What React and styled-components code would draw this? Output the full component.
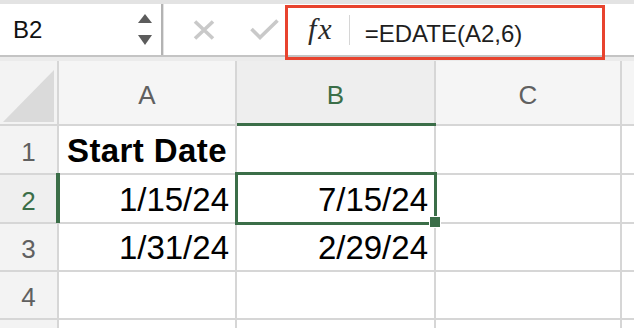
import React from 'react';
import styled, { createGlobalStyle } from 'styled-components';

const GREEN = '#3b6e48';

const Global = createGlobalStyle`
  html, body { margin: 0; padding: 0; background: #fff; overflow: hidden; }
  body { font-family: "Liberation Sans", Arial, sans-serif; }
`;

const Page = styled.div`
  position: relative;
  width: 634px;
  height: 328px;
  overflow: hidden;
  background: #fff;
`;

const Toolbar = styled.div`
  display: flex;
  height: 57px;
  box-sizing: border-box;
  border-top: 4px solid #e3e3e3;
  border-bottom: 2px solid #c4c4c4;
  background: #fff;
`;

const NameBox = styled.div`
  width: 163px;
  box-sizing: border-box;
  display: flex;
  align-items: center;
  justify-content: space-between;
  padding: 0 9px 0 13px;
  border-right: 2px solid #b3b3b3;
  font-size: 24px;
  color: #111;
`;

const Actions = styled.div`
  width: 122px;
  display: flex;
  align-items: center;
  gap: 35px;
  padding-left: 29px;
  box-sizing: border-box;
  border-left: 1px solid #e2e2e2;
`;

const FormulaArea = styled.div`
  flex: 1;
  display: flex;
  align-items: center;
  padding-left: 23px;
`;

const Fx = styled.span`
  font-family: "Liberation Serif", "Times New Roman", serif;
  font-style: italic;
  font-size: 30px;
  letter-spacing: 2px;
  color: #2a2a2a;
  padding-bottom: 2px;
`;

const Divider = styled.span`
  width: 1px;
  height: 30px;
  background: #d6d6d6;
  margin: 0 15px 0 15px;
`;

const FormulaText = styled.span`
  font-size: 24px;
  color: #1e1e1e;
  padding-top: 9px;
`;

const Highlight = styled.div`
  position: absolute;
  left: 285px;
  top: 5px;
  width: 320px;
  height: 55px;
  box-sizing: border-box;
  border: 3px solid #e8432e;
  pointer-events: none;
`;

const Strip = styled.div`
  height: 4px;
  background: #ebebeb;
`;

const Sheet = styled.div`
  display: grid;
  grid-template-columns: 57px 176px 197px 184px 1fr;
  grid-template-rows: 63px 47px 47px 46px 46px 1fr;
  gap: 2px;
  height: 267px;
  background: #d6d6d6;
`;

const Corner = styled.div`
  display: flex;
  align-items: flex-end;
  justify-content: flex-end;
  padding: 0 3px 2px 0;
  background: #f3f3f3;
`;

const ColHeader = styled.div`
  position: relative;
  display: flex;
  align-items: flex-end;
  justify-content: center;
  padding-bottom: 13px;
  box-sizing: border-box;
  background: ${p => (p.$active ? '#eeeeee' : '#f5f5f5')};
  color: ${p => (p.$active ? GREEN : '#606060')};
  font-size: 26px;
  ${p =>
    p.$active &&
    `&::after {
      content: '';
      position: absolute;
      left: 0;
      right: -2px;
      bottom: -2px;
      height: 3px;
      background: ${GREEN};
      z-index: 2;
    }`}
`;

const RowHeader = styled.div`
  position: relative;
  display: flex;
  align-items: flex-end;
  justify-content: center;
  padding-bottom: 5px;
  box-sizing: border-box;
  background: ${p => (p.$active ? '#efefef' : '#f3f3f3')};
  color: ${p => (p.$active ? GREEN : '#606060')};
  font-size: 26px;
  ${p =>
    p.$active &&
    `&::after {
      content: '';
      position: absolute;
      right: -3px;
      top: -2px;
      bottom: -1px;
      width: 4px;
      background: ${GREEN};
      z-index: 2;
    }`}
`;

const Cell = styled.div`
  position: relative;
  display: flex;
  align-items: flex-end;
  justify-content: ${p => (p.$right ? 'flex-end' : 'flex-start')};
  padding: 0 6px 3px 8px;
  box-sizing: border-box;
  background: #fff;
  color: #000;
  font-size: 33px;
  font-weight: ${p => (p.$bold ? 700 : 400)};
  letter-spacing: ${p => (p.$bold ? '0.4px' : '0')};
  white-space: nowrap;
`;

const Selection = styled.div`
  position: absolute;
  top: -3px;
  left: -2px;
  right: -3px;
  bottom: -3px;
  border: 3px solid ${GREEN};
  z-index: 3;
  pointer-events: none;
`;

const FillHandle = styled.div`
  position: absolute;
  right: -7px;
  bottom: -6px;
  width: 10px;
  height: 10px;
  border: 1px solid #fff;
  background: ${GREEN};
  z-index: 4;
`;

const Spinner = () => (
  <svg width="14" height="31" viewBox="0 0 14 31">
    <polygon points="7,0 14,9 0,9" fill="#5c5c5c" />
    <polygon points="0,21 14,21 7,31" fill="#5c5c5c" />
  </svg>
);

const CancelIcon = () => (
  <svg width="22" height="20" viewBox="0 0 22 20">
    <path d="M2 1.5 L20 18.5 M20 1.5 L2 18.5" stroke="#c9c9c9" strokeWidth="3.6" fill="none" />
  </svg>
);

const CheckIcon = () => (
  <svg width="29" height="21" viewBox="0 0 29 21">
    <path d="M1.5 10 L10 18.5 L27.5 1.5" stroke="#c9c9c9" strokeWidth="3.6" fill="none" />
  </svg>
);

const CornerTriangle = () => (
  <svg width="51" height="52" viewBox="0 0 51 52">
    <polygon points="0,52 51,52 51,0" fill="#dadada" />
  </svg>
);

const rows = [
  { n: 1, a: 'Start Date', b: '', bold: true },
  { n: 2, a: '1/15/24', b: '7/15/24', active: true },
  { n: 3, a: '1/31/24', b: '2/29/24' },
  { n: 4, a: '', b: '' },
  { n: 5, a: '', b: '' },
];

export default function App() {
  return (
    <Page>
      <Global />
      <Toolbar>
        <NameBox>
          <span>B2</span>
          <Spinner />
        </NameBox>
        <Actions>
          <CancelIcon />
          <CheckIcon />
        </Actions>
        <FormulaArea>
          <Fx>fx</Fx>
          <Divider />
          <FormulaText>=EDATE(A2,6)</FormulaText>
        </FormulaArea>
      </Toolbar>
      <Strip />
      <Sheet>
        <Corner>
          <CornerTriangle />
        </Corner>
        <ColHeader>A</ColHeader>
        <ColHeader $active>B</ColHeader>
        <ColHeader>C</ColHeader>
        <ColHeader />
        {rows.map(r => (
          <React.Fragment key={r.n}>
            <RowHeader $active={r.active}>{r.n < 5 ? r.n : ''}</RowHeader>
            <Cell $bold={r.bold} $right={!r.bold}>{r.a}</Cell>
            <Cell $right>
              {r.b}
              {r.active && (
                <>
                  <Selection />
                  <FillHandle />
                </>
              )}
            </Cell>
            <Cell />
            <Cell />
          </React.Fragment>
        ))}
      </Sheet>
      <Highlight />
    </Page>
  );
}
